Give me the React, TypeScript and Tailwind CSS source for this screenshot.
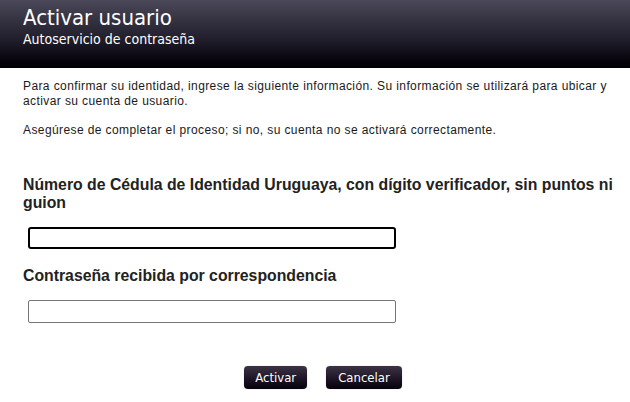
import React from 'react';

const btn =
  "h-[23px] px-[11px] rounded-[4px] bg-gradient-to-b from-[#3d3346] to-[#07030c] text-white text-[13px] leading-none shadow-[0_0_1px_rgba(0,0,0,0.4)] [font-family:'DejaVu_Sans_Condensed','DejaVu_Sans',sans-serif]";

const App: React.FC = () => {
  return (
    <div className="w-[630px] h-[402px] bg-white overflow-hidden">
      <header className="h-[68px] bg-gradient-to-b from-[#4b4959] via-[#1f1d2a] via-60% to-[#020104] pl-[23px] pt-[5px] text-white [font-family:'DejaVu_Sans_Condensed','DejaVu_Sans',sans-serif]">
        <h1 className="text-[22px] leading-[26px]">Activar usuario</h1>
        <p className="text-[14px] leading-[16px]">Autoservicio de contraseña</p>
      </header>

      <main className="px-[23px] pt-[11px] text-[#1a1a1a] [font-family:'Liberation_Sans',Arial,sans-serif]">
        <p className="text-[12px] leading-[15px] tracking-[0.4px]">
          Para confirmar su identidad, ingrese la siguiente información. Su información se utilizará para ubicar y activar su cuenta de usuario.
        </p>
        <p className="text-[12px] leading-[15px] tracking-[0.4px] mt-[14px]">
          Asegúrese de completar el proceso; si no, su cuenta no se activará correctamente.
        </p>

        <label className="block mt-[38px] -mr-[12px] text-[15.8px] leading-[18px] font-bold text-[#222]">
          Número de Cédula de Identidad Uruguaya, con dígito verificador, sin puntos ni guion
        </label>
        <input
          className="block mt-[15px] ml-[5px] w-[368px] h-[22px] border-2 border-black rounded-[3px] outline-none"
          type="text"
        />

        <label className="block mt-[18px] text-[15.8px] leading-[18px] font-bold text-[#222]">
          Contraseña recibida por correspondencia
        </label>
        <input
          className="block mt-[15px] ml-[5px] w-[368px] h-[23px] border border-[#767676] rounded-[2px] outline-none"
          type="password"
        />

        <div className="flex justify-center gap-[19px] mt-[43px] pl-[16px]">
          <button className={btn}>Activar</button>
          <button className={`${btn} px-[12px]`}>Cancelar</button>
        </div>
      </main>
    </div>
  );
};

export default App;
